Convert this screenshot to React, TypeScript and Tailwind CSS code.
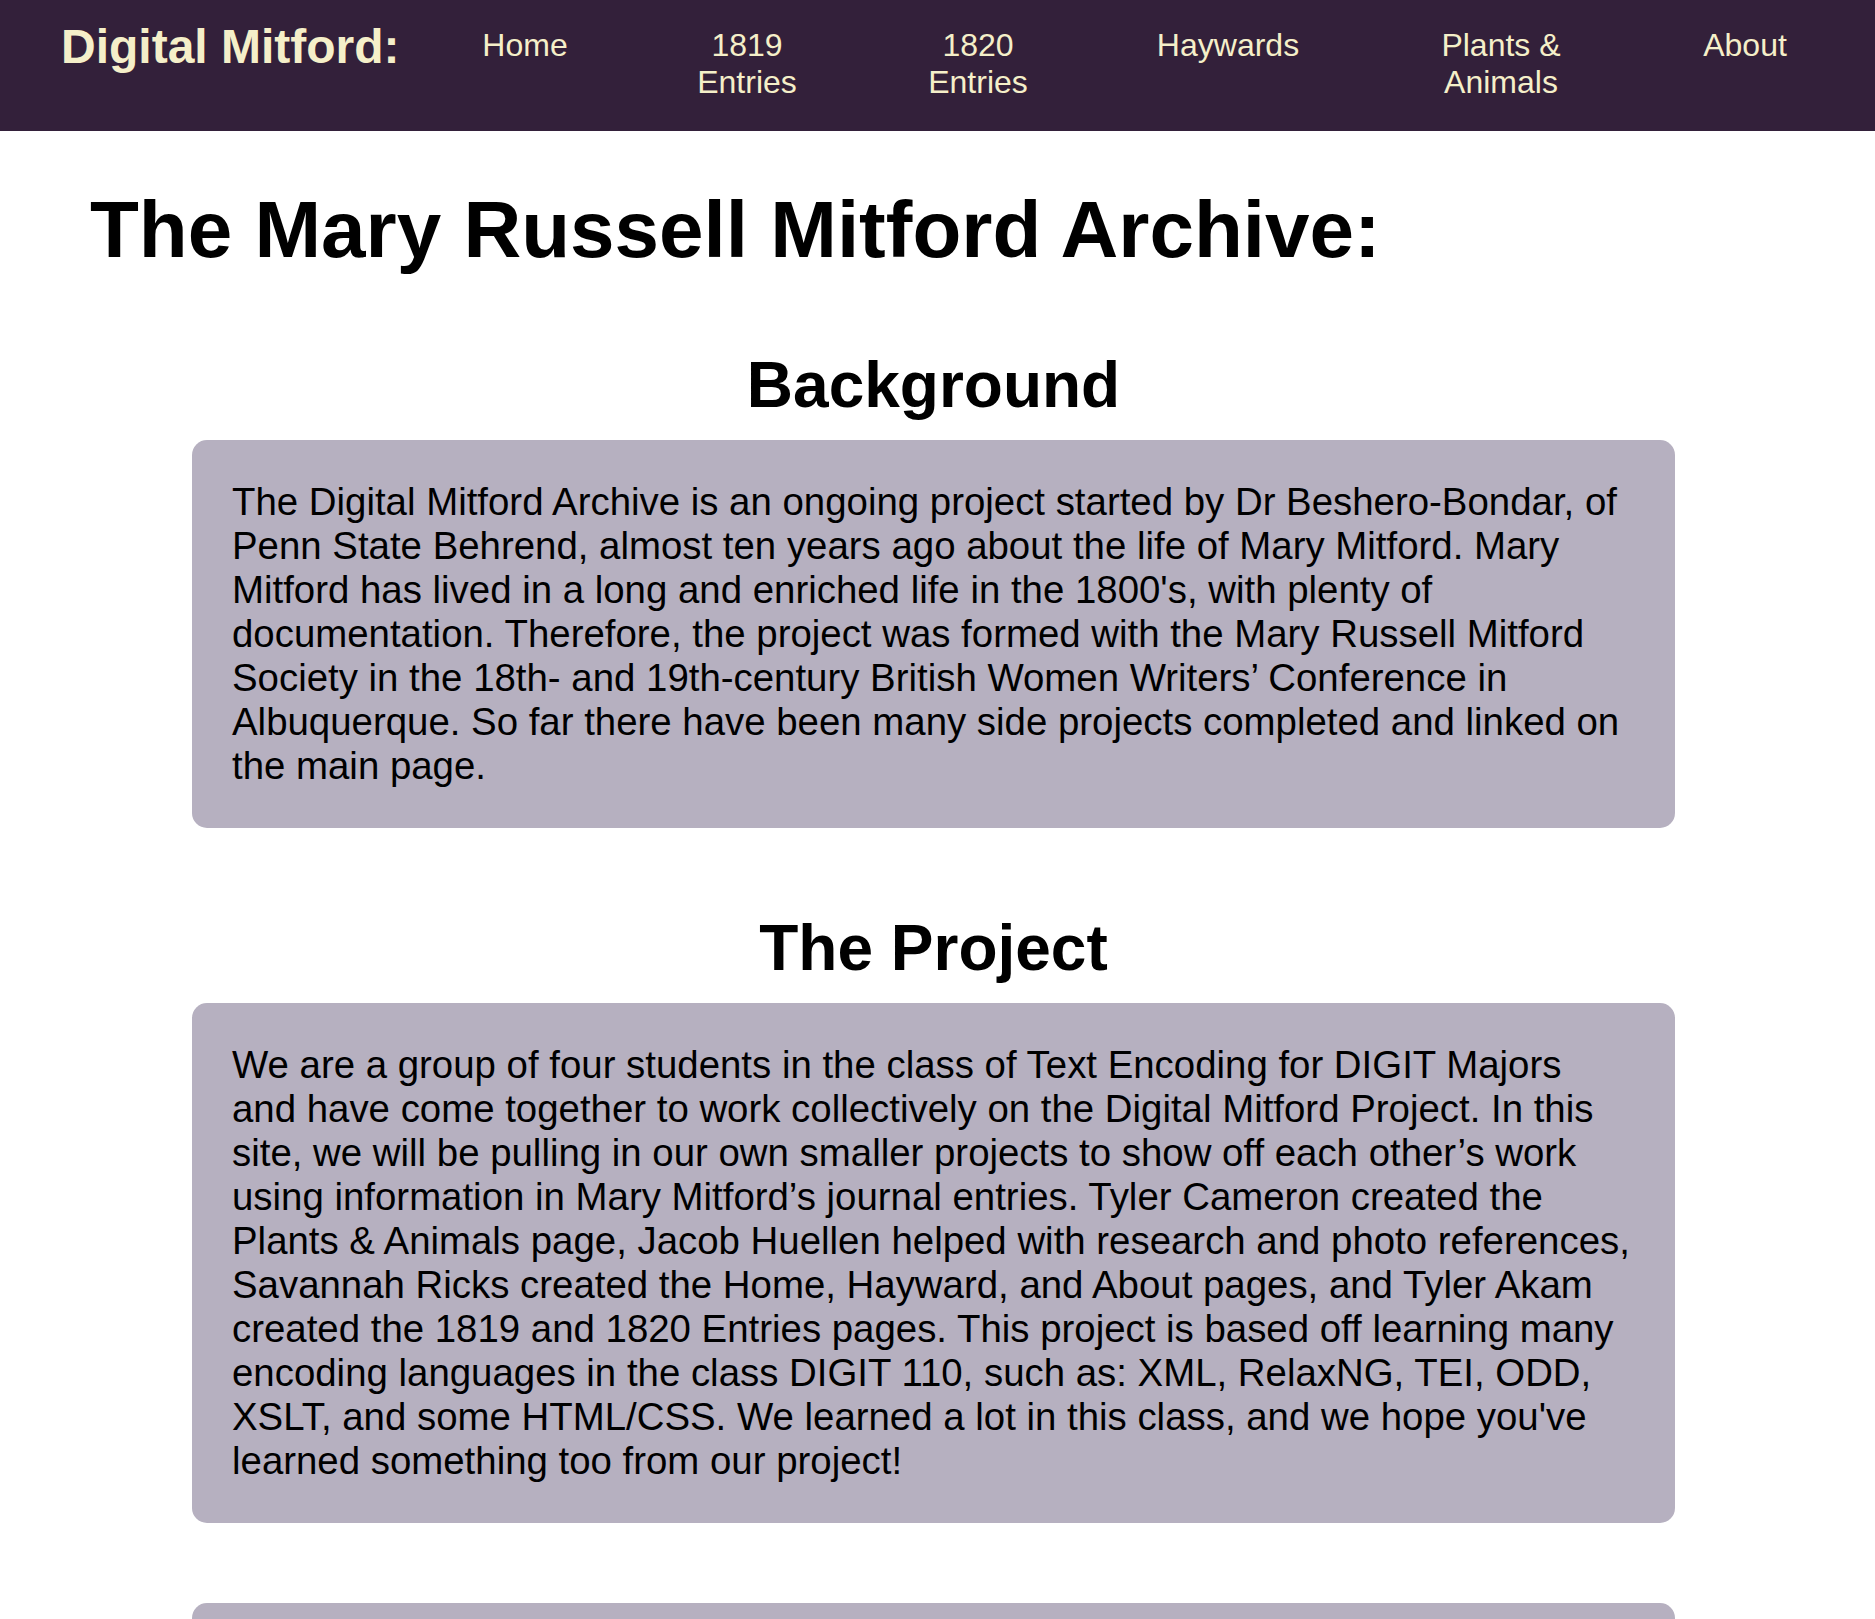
const navItems = [
  { label: "Home", box: "w-[110px]" },
  { label: "1819 Entries", box: "ml-[107px] w-[120px]" },
  { label: "1820 Entries", box: "ml-[111px] w-[120px]" },
  { label: "Haywards", box: "ml-[110px] w-[160px]" },
  { label: "Plants & Animals", box: "ml-[128px] w-[130px]" },
  { label: "About", box: "ml-[124px] w-[110px]" },
];

const Section = ({ title, children }: { title: string; children: React.ReactNode }) => (
  <section className="mt-[83px] first:mt-[72px]">
    <h2 className="text-center text-[64px] font-bold leading-[normal]">{title}</h2>
    <div className="mt-[18px] rounded-[15px] bg-[#b6b0c0] p-[40px] text-[38.4px] leading-[normal]">
      <p>{children}</p>
    </div>
  </section>
);

export default function App() {
  return (
    <div className="min-h-screen bg-white font-['Liberation_Sans',Arial,sans-serif] text-black">
      <nav className="flex h-[131px] items-start bg-[#33203a] text-[#f5efc9]">
        <div className="w-[470px] shrink-0 pl-[61px] pt-[19px] text-[48px] font-bold leading-[normal]">
          Digital Mitford:
        </div>
        <ul className="flex items-start pt-[27px] text-[32px] leading-[normal]">
          {navItems.map(({ label, box }) => (
            <li key={label} className={`${box} shrink-0 text-center`}>
              <a href="#">{label}</a>
            </li>
          ))}
        </ul>
      </nav>

      <main className="pb-[80px]">
        <h1 className="ml-[90px] mt-[53px] text-[80px] font-bold leading-[normal]">
          The Mary Russell Mitford Archive:
        </h1>

        <div className="ml-[192px] w-[1483px]">
          <Section title="Background">
            The Digital Mitford Archive is an ongoing project started by Dr Beshero-Bondar, of Penn
            State Behrend, almost ten years ago about the life of Mary Mitford. Mary Mitford has
            lived in a long and enriched life in the 1800's, with plenty of documentation.
            Therefore, the project was formed with the Mary Russell Mitford Society in the 18th- and
            19th-century British Women Writers’ Conference in Albuquerque. So far there have been
            many side projects completed and linked on the main page.
          </Section>

          <Section title="The Project">
            We are a group of four students in the class of Text Encoding for DIGIT Majors and have
            come together to work collectively on the Digital Mitford Project. In this site, we will
            be pulling in our own smaller projects to show off each other’s work using information
            in Mary Mitford’s journal entries. Tyler Cameron created the Plants &amp; Animals page,
            Jacob Huellen helped with research and photo references, Savannah Ricks created the
            Home, Hayward, and About pages, and Tyler Akam created the 1819 and 1820 Entries pages.
            This project is based off learning many encoding languages in the class DIGIT 110, such
            as: XML, RelaxNG, TEI, ODD, XSLT, and some HTML/CSS. We learned a lot in this class, and
            we hope you've learned something too from our project!
          </Section>

          <div className="mt-[80px] h-[300px] rounded-[15px] bg-[#b6b0c0]" />
        </div>
      </main>
    </div>
  );
}
